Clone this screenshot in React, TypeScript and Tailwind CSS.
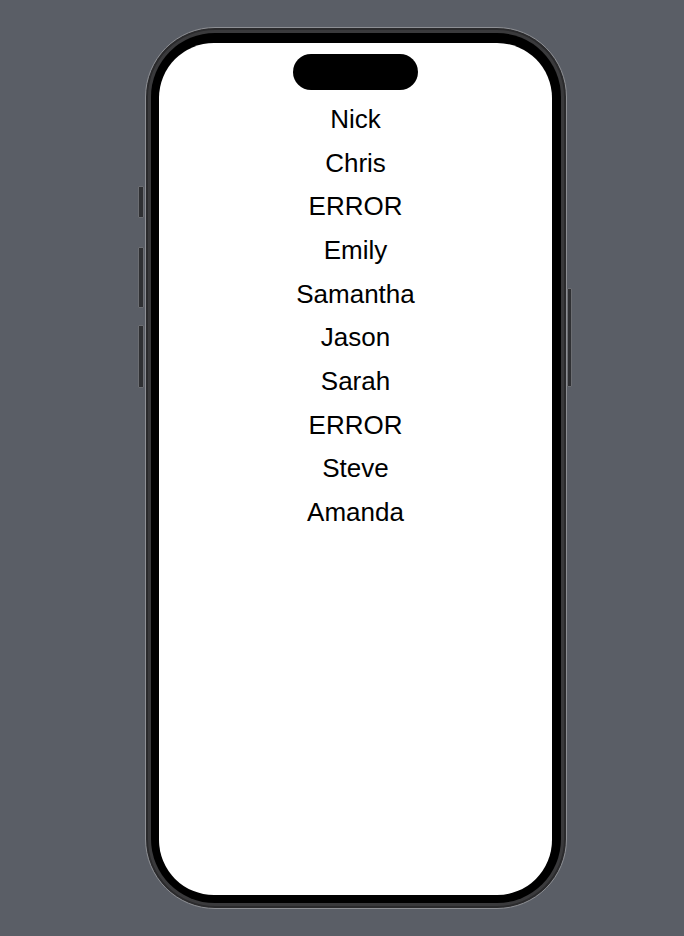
const names = [
  "Nick",
  "Chris",
  "ERROR",
  "Emily",
  "Samantha",
  "Jason",
  "Sarah",
  "ERROR",
  "Steve",
  "Amanda",
];

const SideButton = ({ className }: { className: string }) => (
  <div
    className={`w-full rounded-[1px] bg-[#2f3033] border border-[#6b6d72] ${className}`}
  />
);

export default function App() {
  return (
    <div className="w-[684px] h-[936px] bg-[#5a5e66] overflow-hidden">
      <div className="flex flex-row items-start pl-[138px] pt-[27px]">
        {/* left buttons */}
        <div className="flex flex-col w-[6px] pt-[159px]">
          <SideButton className="h-[32px]" />
          <SideButton className="h-[61px] mt-[29px]" />
          <SideButton className="h-[63px] mt-[17px]" />
        </div>

        {/* phone body */}
        <div className="ml-[1px] w-[422px] h-[882px] rounded-[70px] bg-[#3a3a3c] border border-[#8d8f94] p-[5px] shadow-[inset_0_0_0_2px_#2a2a2c]">
          <div className="w-full h-full rounded-[64px] bg-black pl-[8px] pt-[10px] pr-[9px] pb-[8px]">
            <div
              className="w-[393px] h-[852px] rounded-[55px] bg-white flex flex-col items-center pt-[11px]"
              style={{ fontFamily: '"Liberation Sans", Arial, sans-serif' }}
            >
              <div className="w-[125px] h-[36px] rounded-full bg-black" />
              <ul className="mt-[8px] flex flex-col items-center text-[26px] leading-[43.67px] text-black">
                {names.map((n, i) => (
                  <li key={i}>{n}</li>
                ))}
              </ul>
            </div>
          </div>
        </div>

        {/* right button */}
        <div className="w-[5px] pt-[261px]">
          <SideButton className="h-[99px]" />
        </div>
      </div>
    </div>
  );
}
